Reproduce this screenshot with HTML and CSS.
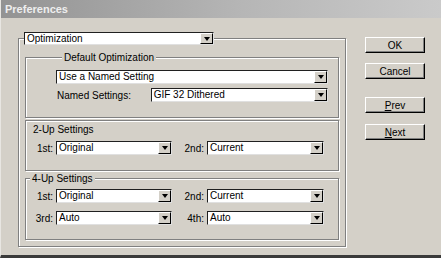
FILE: index.html
```html
<!DOCTYPE html>
<html lang="en">
<head>
    <meta charset="UTF-8">
    <title>Preferences</title>
    <link rel="stylesheet" href="styles.css">
</head>
<body>

<div class="window">
    <div class="titlebar">Preferences</div>

    <div class="dialog">
        <!-- Left: the settings panel -->
        <fieldset class="panel">
            <legend class="panel-legend">
                <div class="combo combo-top"><span class="combo-text">Optimization</span><span class="combo-arrow"></span></div>
            </legend>

            <fieldset class="group group-default">
                <legend class="group-legend">Default Optimization</legend>
                <div class="combo combo-wide"><span class="combo-text">Use a Named Setting</span><span class="combo-arrow"></span></div>
                <div class="named-row">
                    <span class="named-label">Named Settings:</span>
                    <div class="combo combo-named"><span class="combo-text">GIF 32 Dithered</span><span class="combo-arrow"></span></div>
                </div>
            </fieldset>

            <div class="group group-two">
                <div class="group-title">2-Up Settings</div>
                <div class="pair-row">
                    <span class="row-label">1st:</span>
                    <div class="combo combo-a"><span class="combo-text">Original</span><span class="combo-arrow"></span></div>
                    <span class="row-label row-label-b">2nd:</span>
                    <div class="combo combo-b"><span class="combo-text">Current</span><span class="combo-arrow"></span></div>
                </div>
            </div>

            <fieldset class="group group-four">
                <legend class="group-legend group-legend-four">4-Up Settings</legend>
                <div class="pair-row">
                    <span class="row-label">1st:</span>
                    <div class="combo combo-a"><span class="combo-text">Original</span><span class="combo-arrow"></span></div>
                    <span class="row-label row-label-b">2nd:</span>
                    <div class="combo combo-b"><span class="combo-text">Current</span><span class="combo-arrow"></span></div>
                </div>
                <div class="pair-row pair-row-second">
                    <span class="row-label">3rd:</span>
                    <div class="combo combo-a"><span class="combo-text">Auto</span><span class="combo-arrow"></span></div>
                    <span class="row-label row-label-b">4th:</span>
                    <div class="combo combo-b"><span class="combo-text">Auto</span><span class="combo-arrow"></span></div>
                </div>
            </fieldset>
        </fieldset>

        <!-- Right: dialog buttons -->
        <div class="buttons">
            <button class="btn btn-ok">OK</button>
            <button class="btn btn-cancel">Cancel</button>
            <button class="btn btn-prev"><u>P</u>rev</button>
            <button class="btn btn-next"><u>N</u>ext</button>
        </div>
    </div>
</div>

</body>
</html>
```

FILE: styles.css
```css
body {
    margin: 0;
    font-family: "Liberation Sans", Arial, sans-serif;
    font-size: 10px;
    color: #000;
    background-color: #d4d0c8;
}
.window {
    width: 441px;
    height: 258px;
    box-sizing: border-box;
    background-color: #d4d0c8;
    border-left: 1px solid #e8e6e2;
    border-bottom: 3px solid #3a3a3a;
}
.titlebar {
    height: 18px;
    line-height: 18px;
    padding-left: 4px;
    color: #eeeeee;
    font-weight: bold;
    font-size: 11px;
    background: linear-gradient(to right, #939393, #b6b6b6 55%, #cacaca);
}
.dialog {
    display: flex;
    align-items: flex-start;
    padding: 14px 0 0 17px;
}

/* etched group borders */
.panel,
.group {
    margin: 0;
    border: 1px solid #808080;
    box-shadow: 1px 1px 0 #fff, inset 1px 1px 0 #fff;
    min-width: 0;
}
.panel {
    box-sizing: border-box;
    width: 328px;
    padding: 0 6px 6px 6px;
}
.panel-legend {
    padding: 0;
    margin-left: -1px;
    background-color: #d4d0c8;
}
.group {
    box-sizing: border-box;
    width: 314px;
}
.group-legend {
    margin-left: 6px;
    padding: 0 2px;
    line-height: 13px;
    background-color: #d4d0c8;
}
.group-legend-four {
    margin-left: 4px;
}
.group-default {
    margin-top: 6px;
    padding: 6px 10px 15px 30px;
}
.group-two {
    margin-top: 2px;
    padding: 2px 0 15px 0;
}
.group-title {
    line-height: 13px;
    padding-left: 7px;
}
.group-two .pair-row {
    margin-top: 5px;
}
.group-four {
    margin-top: 1px;
    padding: 4px 0 14px 0;
}
.pair-row {
    display: flex;
    align-items: center;
}
.pair-row-second {
    margin-top: 8px;
}
.row-label {
    width: 30px;
    box-sizing: border-box;
    padding-right: 3px;
    text-align: right;
}
.row-label-b {
    width: 35px;
}
.named-row {
    display: flex;
    align-items: center;
    margin-top: 4px;
}
.named-label {
    width: 94px;
    padding-left: 1px;
}

/* combo boxes */
.combo {
    display: flex;
    box-sizing: border-box;
    height: 14px;
    background-color: #fff;
    border: 1px solid;
    border-color: #202020 #e0e0e0 #e0e0e0 #202020;
}
.combo-text {
    flex: 1;
    padding-left: 2px;
    line-height: 12px;
    white-space: nowrap;
    overflow: hidden;
}
.combo-arrow {
    width: 13px;
    box-sizing: border-box;
    background-color: #d4d0c8;
    border: 1px solid;
    border-color: #fff #000 #000 #fff;
    display: flex;
    align-items: center;
    justify-content: center;
}
.combo-arrow::before {
    content: "";
    border-left: 3px solid transparent;
    border-right: 3px solid transparent;
    border-top: 4px solid #000;
}
.combo-top {
    width: 190px;
    height: 13px;
}
.combo-top .combo-text {
    line-height: 11px;
}
.combo-wide {
    width: 272px;
}
.combo-named {
    width: 178px;
}
.combo-a {
    width: 116px;
}
.combo-b {
    width: 117px;
}

/* buttons */
.buttons {
    display: flex;
    flex-direction: column;
    margin-left: 19px;
    padding-top: 5px;
}
.btn {
    width: 60px;
    height: 16px;
    padding: 0;
    font-family: "Liberation Sans", Arial, sans-serif;
    font-size: 10px;
    color: #000;
    background-color: #d4d0c8;
    border: 1px solid;
    border-color: #fff #000 #000 #fff;
    box-shadow: inset -1px -1px 0 #808080;
}
.btn-cancel {
    margin-top: 10px;
}
.btn-prev {
    margin-top: 18px;
}
.btn-next {
    margin-top: 11px;
}
```
